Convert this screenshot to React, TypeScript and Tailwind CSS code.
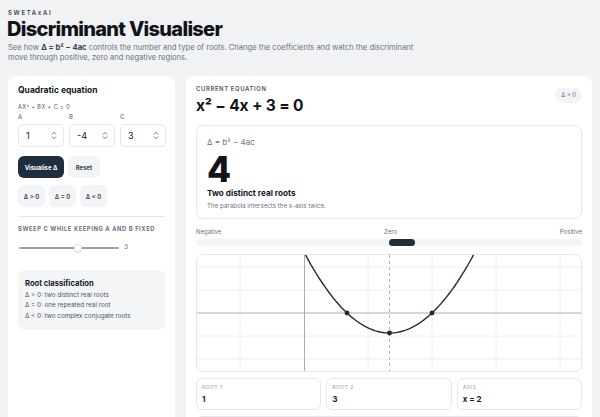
import React from "react";

function Spinner() {
  return (
    <svg width="6" height="9" viewBox="0 0 6 9" fill="none" stroke="#6b7280" strokeWidth="1" strokeLinecap="round" strokeLinejoin="round">
      <path d="M1.2 3.2 L3 1.4 L4.8 3.2" />
      <path d="M1.2 5.8 L3 7.6 L4.8 5.8" />
    </svg>
  );
}

function NumField({ label, value }: { label: string; value: string }) {
  return (
    <div className="flex flex-col">
      <div className="text-[6px] text-gray-600 h-[10px] leading-[10px]">{label}</div>
      <div className="mt-[2px] h-[23px] w-[46px] rounded-[5px] border border-gray-200 bg-white flex items-center justify-between pl-[7px] pr-[6px]">
        <span className="text-[9px] text-gray-900">{value}</span>
        <Spinner />
      </div>
    </div>
  );
}

function Chart() {
  const W = 386;
  const H = 117;
  const ox = 107.5;
  const oy = 58;
  const sx = 42.5;
  const sy = 20;
  const pts: string[] = [];
  for (let px = 0; px <= W; px += 2) {
    const x = (px - ox) / sx;
    const y = x * x - 4 * x + 3;
    const py = oy - sy * y;
    pts.push(`${px === 0 ? "M" : "L"}${px.toFixed(1)} ${py.toFixed(1)}`);
  }
  const vx = [43, 171, 235, 299, 363];
  const hy = [12, 35, 81, 104];
  return (
    <svg width={W} height={H} viewBox={`0 0 ${W} ${H}`} className="block">
      {vx.map((x) => (
        <line key={"v" + x} x1={x} y1={0} x2={x} y2={H} stroke="#eceef1" strokeWidth="1" />
      ))}
      {hy.map((y) => (
        <line key={"h" + y} x1={0} y1={y} x2={W} y2={y} stroke="#eceef1" strokeWidth="1" />
      ))}
      <line x1={0} y1={oy} x2={W} y2={oy} stroke="#a8adb5" strokeWidth="1" />
      <line x1={ox} y1={0} x2={ox} y2={H} stroke="#a8adb5" strokeWidth="1" />
      <line x1={192.5} y1={0} x2={192.5} y2={H} stroke="#9ca3af" strokeWidth="0.8" strokeDasharray="3 3" />
      <path d={pts.join(" ")} fill="none" stroke="#1f2a3a" strokeWidth="1.4" />
      <circle cx={150} cy={oy} r={2.4} fill="#1f2a3a" />
      <circle cx={235} cy={oy} r={2.4} fill="#1f2a3a" />
      <circle cx={192.5} cy={78} r={2.4} fill="#1f2a3a" />
    </svg>
  );
}

export default function App() {
  return (
    <div
      className="w-[600px] h-[417px] overflow-hidden bg-[#f1f2f4] pl-[8px] pr-[8px] pt-[9px]"
      style={{ fontFamily: "Inter, 'Noto Sans', sans-serif" }}
    >
      <div>
        <div className="text-[6px] font-semibold tracking-[0.28em] text-gray-700 leading-[8px]">SWETAxAI</div>
        <h1 className="text-[20px] font-extrabold tracking-[-0.035em] text-[#111318] leading-[24px] -ml-[1px]">
          Discriminant Visualiser
        </h1>
        <div className="mt-[2px] text-[7.6px] leading-[10px] text-gray-500">
          <div className="whitespace-nowrap">
            <span>See how </span>
            <b className="font-bold text-gray-700">Δ = b² − 4ac</b>
            <span> controls the number and type of roots. Change the coefficients and watch the discriminant</span>
          </div>
          <div>move through positive, zero and negative regions.</div>
        </div>
      </div>

      <div className="mt-[13px] flex gap-[11px] items-start">
        {/* Left card */}
        <div className="w-[167px] h-[360px] shrink-0 rounded-[8px] bg-white px-[10px] pt-[8px]">
          <div className="text-[8.5px] font-bold text-gray-900 leading-[12px]">Quadratic equation</div>
          <div className="mt-[7px] text-[5.5px] tracking-[0.08em] text-gray-600 leading-[8px]">AX² + BX + C = 0</div>
          <div className="mt-[1px] flex gap-[5px]">
            <NumField label="A" value="1" />
            <NumField label="B" value="-4" />
            <NumField label="C" value="3" />
          </div>
          <div className="mt-[9px] flex gap-[4px]">
            <div className="h-[22px] w-[46px] rounded-[6px] bg-[#1f2d3d] text-white text-[6px] font-bold flex items-center justify-center">
              Visualise Δ
            </div>
            <div className="h-[22px] w-[32px] rounded-[6px] bg-gray-100 text-gray-700 text-[6px] font-bold flex items-center justify-center">
              Reset
            </div>
          </div>
          <div className="mt-[7px] flex gap-[4px]">
            {["Δ > 0", "Δ = 0", "Δ < 0"].map((t) => (
              <div
                key={t}
                className="h-[22px] w-[27px] rounded-[6px] bg-gray-100 text-gray-700 text-[6px] font-semibold flex items-center justify-center"
              >
                {t}
              </div>
            ))}
          </div>
          <div className="mt-[9px] h-px bg-gray-200" />
          <div className="mt-[8px] text-[5.8px] font-bold tracking-[0.1em] text-gray-500 leading-[8px]">
            SWEEP C WHILE KEEPING A AND B FIXED
          </div>
          <div className="mt-[10px] flex items-center gap-[5px] pl-[1px]">
            <div className="relative w-[100px] h-[8px] flex items-center">
              <div className="w-full h-[2px] rounded-full bg-gray-400" />
              <div className="absolute left-[55px] top-0 w-[8px] h-[8px] rounded-full bg-white border border-gray-200 shadow-sm" />
            </div>
            <span className="text-[6.5px] text-gray-500">3</span>
          </div>
          <div className="mt-[17px] rounded-[7px] bg-[#f4f5f7] px-[7px] pt-[8px] pb-[9px]">
            <div className="text-[7.6px] font-bold text-gray-900 leading-[11px]">Root classification</div>
            <div className="mt-[1px] text-[6.3px] text-gray-600 leading-[10.5px]">
              <div>Δ &gt; 0: two distinct real roots</div>
              <div>Δ = 0: one repeated real root</div>
              <div>Δ &lt; 0: two complex conjugate roots</div>
            </div>
          </div>
        </div>

        {/* Right card */}
        <div className="w-[406px] h-[360px] shrink-0 rounded-[8px] bg-white px-[10px] pt-[9px]">
          <div className="flex justify-between items-start">
            <div>
              <div className="text-[5.8px] font-semibold tracking-[0.12em] text-gray-600 leading-[8px]">CURRENT EQUATION</div>
              <div className="mt-[2px] text-[15.5px] font-bold text-[#111318] leading-[22px] tracking-[-0.01em]">
                x² − 4x + 3 = 0
              </div>
            </div>
            <div className="mt-[3px] h-[15px] px-[6px] rounded-full bg-gray-100 text-[5.8px] text-gray-500 flex items-center">
              Δ &gt; 0
            </div>
          </div>
          <div className="mt-[8px] h-[94px] rounded-[7px] border border-gray-200 px-[10px] pt-[11px]">
            <div className="text-[8px] text-gray-500 leading-[10px]">Δ = b² − 4ac</div>
            <div className="mt-[4px] text-[35px] font-extrabold text-[#111318] leading-[36px]">4</div>
            <div className="mt-[1px] text-[8.2px] font-bold text-gray-900 leading-[11px]">Two distinct real roots</div>
            <div className="mt-[2px] text-[6.2px] text-gray-500 leading-[9px]">The parabola intersects the x-axis twice.</div>
          </div>
          <div className="mt-[9px] relative h-[8px] text-[6px] text-gray-500 leading-[8px]">
            <span className="absolute left-0 top-0">Negative</span>
            <span className="absolute left-[188px] top-0">Zero</span>
            <span className="absolute right-0 top-0">Positive</span>
          </div>
          <div className="mt-[3px] relative h-[7px] rounded-full bg-gray-100">
            <div className="absolute left-[193px] top-0 h-[7px] w-[26px] rounded-full bg-[#1f2d3d]" />
          </div>
          <div className="mt-[8px] h-[118px] rounded-[7px] border border-gray-200 overflow-hidden">
            <Chart />
          </div>
          <div className="mt-[6px] grid grid-cols-3 gap-[5px]">
            {[
              ["ROOT 1", "1"],
              ["ROOT 2", "3"],
              ["AXIS", "x = 2"],
            ].map(([l, v]) => (
              <div key={l} className="h-[32px] rounded-[6px] border border-gray-200 px-[5px] pt-[5px]">
                <div className="text-[5.2px] tracking-[0.08em] text-gray-400 leading-[7px]">{l}</div>
                <div className="mt-[3px] text-[8px] font-bold text-gray-900 leading-[10px]">{v}</div>
              </div>
            ))}
          </div>
          <div className="mt-[6px] h-[30px] rounded-[6px] border border-gray-200" />
        </div>
      </div>
    </div>
  );
}
